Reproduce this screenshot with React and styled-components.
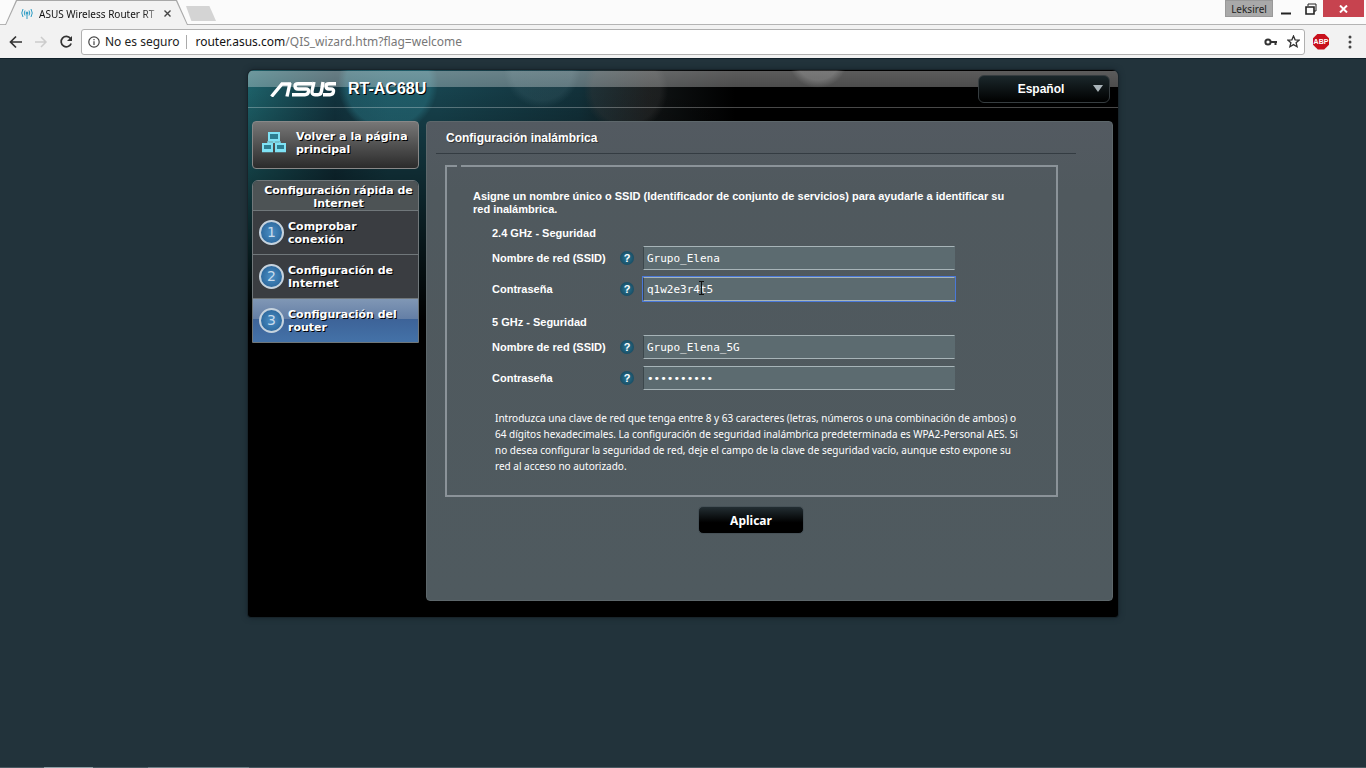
import React, { useState } from "react";
import styled, { createGlobalStyle } from "styled-components";

const STEPS = ["Comprobar conexión", "Configuración de Internet", "Configuración del router"];

const Field = ({ id, label, type = "text", value, onChange, focused, children }) => (
    <Row>
        <Label htmlFor={id}>{label}</Label>
        <HelpBtn type="button" aria-label={`Ayuda: ${label}`}>
            ?
        </HelpBtn>
        <InputWrap>
            <Input
                id={id}
                type={type}
                value={value}
                $focused={focused}
                onChange={(e) => onChange(id, e.target.value)}
            />
            {children}
        </InputWrap>
    </Row>
);

const AsusLogo = () => (
    <Logo viewBox="0 0 66 16" role="img" aria-label="ASUS">
        <g fill="none" stroke="#fff" strokeWidth="3.4">
            <path d="M1.500 15.500 L12 3 H21" />
            <path d="M20 2 L17 15.500" />
            <path d="M42 2.700 H28 Q25 2.700 25 5 Q25 8 28 8 H36 Q39 8 38.500 10.500 Q38 13.700 35 13.700 H22" />
            <path d="M44 1 L42 10 Q41.500 13.700 45 13.700 H48 Q51 13.700 51.500 10 L53 1" />
            <path d="M66 2.700 H59 Q56 2.700 56 5 Q56 8 59 8 H61 Q64 8 63.500 10.500 Q63 13.700 60 13.700 H53" />
        </g>
    </Logo>
);

const App = () => {
    const [values, setValues] = useState({
        ssid24: "Grupo_Elena",
        key24: "q1w2e3r4t5",
        ssid5: "Grupo_Elena_5G",
        key5: "q1w2e3r4t5",
    });
    const update = (id, value) => setValues({ ...values, [id]: value });

    return (
        <Window>
            <GlobalStyle />
            <TitleBar>
                <Tab>
                    <svg width="12" height="12" viewBox="0 0 12 12" fill="none" stroke="#2d9cc4">
                        <circle cx="6" cy="5" r="1" fill="#2d9cc4" />
                        <path d="M6 6V11M4 2.500Q2.500 5 4 7.500M8 2.500Q9.500 5 8 7.500M2 1Q-.5 5 2 9M10 1Q12.500 5 10 9" />
                    </svg>
                    <TabTitle>ASUS Wireless Router RT</TabTitle>
                    <TabClose aria-label="Cerrar pestaña">
                        <svg width="7" height="7" viewBox="0 0 7 7" stroke="#444" strokeWidth="1.4">
                            <path d="M.5 .5L6.500 6.500M6.500 .5L.5 6.500" />
                        </svg>
                    </TabClose>
                </Tab>
                <NewTab aria-label="Nueva pestaña" />
                <Spacer />
                <UserBtn>Leksirel</UserBtn>
                <WindowBtn aria-label="Minimizar">
                    <svg width="11" height="12" viewBox="0 0 11 12">
                        <path d="M1 10.500H11" stroke="#222" strokeWidth="2" />
                    </svg>
                </WindowBtn>
                <WindowBtn aria-label="Restaurar">
                    <svg width="12" height="12" viewBox="0 0 12 12" fill="none" stroke="#222">
                        <path d="M3 3V1H11V8H9" />
                        <path d="M1 4H9V11H1Z" strokeWidth="1.6" />
                    </svg>
                </WindowBtn>
                <CloseBtn aria-label="Cerrar">
                    <svg width="9" height="8" viewBox="0 0 9 8" stroke="#fff" strokeWidth="2">
                        <path d="M1 0.500L8 7.500M8 0.500L1 7.500" />
                    </svg>
                </CloseBtn>
            </TitleBar>

            <Toolbar>
                <ToolBtn aria-label="Atrás">
                    <svg width="14" height="14" viewBox="0 0 14 14" fill="none" stroke="#333" strokeWidth="1.7">
                        <path d="M13 7H2M7 1.500L1.500 7L7 12.500" />
                    </svg>
                </ToolBtn>
                <ToolBtn aria-label="Adelante">
                    <svg width="14" height="14" viewBox="0 0 14 14" fill="none" stroke="#ccc" strokeWidth="1.5">
                        <path d="M1 7H12M7 2L12 7L7 12" />
                    </svg>
                </ToolBtn>
                <ToolBtn aria-label="Recargar">
                    <svg width="14" height="14" viewBox="0 0 14 14" fill="none" stroke="#333" strokeWidth="1.7">
                        <path d="M11.500 3.500A5.200 5.200 0 1 0 12.200 8.500" />
                        <path d="M13 1V6H8Z" fill="#333" stroke="none" />
                    </svg>
                </ToolBtn>
                <AddressBar>
                    <svg width="12" height="12" viewBox="0 0 12 12" fill="none" stroke="#444" strokeWidth="1.2">
                        <circle cx="6" cy="6" r="5.2" />
                        <path d="M6 5.300V9M6 3V4.300" />
                    </svg>
                    <Insecure>No es seguro</Insecure>
                    <Url>
                        router.asus.com<UrlPath>/QIS_wizard.htm?flag=welcome</UrlPath>
                    </Url>
                    <svg width="14" height="8" viewBox="0 0 14 8" fill="none" stroke="#333" strokeWidth="2">
                        <circle cx="4" cy="4" r="2.6" />
                        <path d="M6.500 4H13M11.500 4V7" />
                    </svg>
                    <Star width="13" height="13" viewBox="0 0 13 13" fill="none" stroke="#333" strokeWidth="1.3">
                        <path d="M6.500 1L8.100 4.800L12.200 5.100L9.100 7.700L10.100 11.700L6.500 9.600L2.900 11.700L3.900 7.700L.8 5.100L4.900 4.800Z" />
                    </Star>
                </AddressBar>
                <AdBlockBtn>ABP</AdBlockBtn>
                <ToolBtn aria-label="Menú">
                    <svg width="4" height="14" viewBox="0 0 4 14" fill="#444">
                        <circle cx="2" cy="2" r="1.5" />
                        <circle cx="2" cy="7" r="1.5" />
                        <circle cx="2" cy="12" r="1.5" />
                    </svg>
                </ToolBtn>
            </Toolbar>

            <Page>
                <Router>
                    <Header>
                        <AsusLogo />
                        <Model>RT-AC68U</Model>
                        <LangWrap>
                            <LangSelect aria-label="Idioma" defaultValue="es">
                                <option value="es">Español</option>
                            </LangSelect>
                            <LangArrow viewBox="0 0 10 7" fill="#a9b3b8">
                                <path d="M0 0H10L5 7Z" />
                            </LangArrow>
                        </LangWrap>
                    </Header>
                    <Body>
                        <Sidebar>
                            <HomeBtn>
                                <svg width="26" height="22" viewBox="0 0 26 22" fill="#2d7f92" stroke="#7fe2f5" strokeWidth="2">
                                    <path d="M8 1H18V8H8ZM2 12H11V18H2ZM15 12H24V18H15Z" />
                                    <path d="M13 8V11M7 11V10H19V11M1 19.500H12M14 19.500H25" fill="none" strokeWidth="1.4" />
                                </svg>
                                <span>Volver a la página principal</span>
                            </HomeBtn>
                            <Menu>
                                <MenuTitle>Configuración rápida de Internet</MenuTitle>
                                {STEPS.map((step, i) => (
                                    <MenuItem key={step} href="#" $active={i === 2}>
                                        <StepNumber>{i + 1}</StepNumber>
                                        <StepName>{step}</StepName>
                                    </MenuItem>
                                ))}
                            </Menu>
                        </Sidebar>
                        <Content>
                            <Title>Configuración inalámbrica</Title>
                            <Form>
                                <legend />
                                <Intro>
                                    Asigne un nombre único o SSID (Identificador de conjunto de servicios) para
                                    ayudarle a identificar su red inalámbrica.
                                </Intro>
                                <Band>
                                    <BandTitle>2.4 GHz - Seguridad</BandTitle>
                                    <Field id="ssid24" label="Nombre de red (SSID)" value={values.ssid24} onChange={update} />
                                    <Field id="key24" label="Contraseña" value={values.key24} onChange={update} focused>
                                        <TextCursor viewBox="0 0 7 14" fill="none" stroke="#111">
                                            <path d="M1 .5H6M3.500 1V13M1 13.500H6" />
                                        </TextCursor>
                                    </Field>
                                </Band>
                                <Band>
                                    <BandTitle>5 GHz - Seguridad</BandTitle>
                                    <Field id="ssid5" label="Nombre de red (SSID)" value={values.ssid5} onChange={update} />
                                    <Field id="key5" label="Contraseña" type="password" value={values.key5} onChange={update} />
                                </Band>
                                <Note>
                                    Introduzca una clave de red que tenga entre 8 y 63 caracteres (letras, números o
                                    una combinación de ambos) o 64 dígitos hexadecimales. La configuración de
                                    seguridad inalámbrica predeterminada es WPA2-Personal AES. Si no desea configurar
                                    la seguridad de red, deje el campo de la clave de seguridad vacío, aunque esto
                                    expone su red al acceso no autorizado.
                                </Note>
                            </Form>
                            <ApplyBtn>Aplicar</ApplyBtn>
                        </Content>
                    </Body>
                </Router>
            </Page>
            <Taskbar />
        </Window>
    );
};

const GlobalStyle = createGlobalStyle`
    * {
        box-sizing: border-box;
    }
    body {
        margin: 0;
        background: #22333b;
        font-family: Arial, "Liberation Sans", sans-serif;
    }
    button {
        padding: 0;
        border: none;
        background: none;
        cursor: pointer;
    }
    svg {
        flex-shrink: 0;
    }
`;

const Window = styled.div`
    display: flex;
    flex-direction: column;
    min-height: 100vh;
`;

const TitleBar = styled.header`
    display: flex;
    align-items: flex-start;
    height: 25px;
    background: #fbfbfb;
    border-bottom: 1px solid #b4b4b4;
    font-family: "Noto Sans", sans-serif;
`;

const Tab = styled.div`
    display: flex;
    align-items: center;
    width: 188px;
    height: 25px;
    padding: 2px 16px 0 21px;
    background: #a8a8a8;
    clip-path: polygon(5px 100%, 16px 0, 177px 0, 188px 100%);
    position: relative;
    z-index: 0;

    &::before {
        content: "";
        position: absolute;
        inset: 1px 0 0;
        z-index: -1;
        background: #f2f2f2;
        clip-path: polygon(6px 100%, 17px 0, 176px 0, 187px 100%);
    }
`;

const TabTitle = styled.span`
    width: 118px;
    margin-left: 6px;
    white-space: nowrap;
    font-size: 10px;
    color: #111;
    mask-image: linear-gradient(90deg, #000 88%, #0004);
`;

const TabClose = styled.button`
    display: flex;
    margin-left: 7px;
`;

const NewTab = styled.button`
    width: 30px;
    height: 15px;
    margin: 6px 0 0 -2px;
    background: #d4d4d4;
    clip-path: polygon(0 0, 78% 0, 100% 100%, 18% 100%);
`;

const Spacer = styled.div`
    flex: 1;
`;

const UserBtn = styled.button`
    width: 48px;
    height: 17px;
    background: #a9a9a9;
    border: 1px solid #999;
    font-family: "Noto Sans", sans-serif;
    font-size: 10px;
    line-height: 14px;
    color: #222;
`;

const WindowBtn = styled.button`
    display: flex;
    align-items: center;
    justify-content: center;
    width: 25px;
    height: 17px;
`;

const CloseBtn = styled(WindowBtn)`
    width: 41px;
    margin-right: 2px;
    background: #c7434f;
`;

const Toolbar = styled.div`
    display: flex;
    align-items: center;
    height: 34px;
    padding: 0 9px;
    gap: 11px;
    background: #f2f2f2;
    border-bottom: 1px solid #10202a;
    font-family: "Noto Sans", sans-serif;
`;

const ToolBtn = styled.button`
    display: flex;
    justify-content: center;
    min-width: 14px;
`;

const AddressBar = styled.div`
    display: flex;
    align-items: center;
    flex: 1;
    height: 26px;
    margin: 0 -3px;
    padding: 0 4px 0 6px;
    background: #fff;
    border: 1px solid #b0b0b0;
    border-radius: 3px;
    font-size: 12px;
`;

const Insecure = styled.span`
    margin-left: 5px;
    padding-right: 7px;
    border-right: 1px solid #aaa;
    line-height: 14px;
    color: #222;
`;

const Url = styled.span`
    flex: 1;
    margin-left: 8px;
    color: #111;
`;

const UrlPath = styled.span`
    color: #777;
`;

const Star = styled.svg`
    margin-left: 9px;
`;

const AdBlockBtn = styled.button`
    width: 16px;
    height: 16px;
    margin-right: 3px;
    background: #c8101c;
    clip-path: polygon(30% 0, 70% 0, 100% 30%, 100% 70%, 70% 100%, 30% 100%, 0 70%, 0 30%);
    font-family: "Liberation Sans", sans-serif;
    font-size: 7px;
    font-weight: bold;
    color: #fff;
`;

const Page = styled.main`
    flex: 1;
    padding: 11px 16px 24px;
    background: #22333b;
`;

const Router = styled.div`
    max-width: 870px;
    margin: 0 auto;
    padding: 0 5px 16px 4px;
    border-radius: 6px 6px 3px 3px;
    box-shadow: 0 0 0 1px #18242a, 0 0 6px #131f28;
    background:
        linear-gradient(#ffffff5c, #ffffff4c) 0 1px / 100% 16px no-repeat,
        linear-gradient(#ffffff50, #ffffff40) 0 37px / 100% 1px no-repeat,
        radial-gradient(circle at 140px 14px, #2a7a8870 0 42px, transparent 50px),
        radial-gradient(circle at 294px 0, #3b606a50 0 30px, transparent 38px),
        radial-gradient(circle at 570px -12px, #77777760 0 22px, transparent 30px),
        radial-gradient(circle at 378px 20px, #3b3b3b50 0 34px, transparent 42px),
        linear-gradient(transparent 20px, #000 250px),
        linear-gradient(90deg, #1d6068, #12333e 10%, #17434e 16%, #17434e 22%, #12313a 38%, #101415 46%, #000 56%);
`;

const Header = styled.div`
    display: flex;
    align-items: center;
    height: 37px;
    padding: 0 3px 0 18px;
`;

const Logo = styled.svg`
    width: 66px;
    height: 16px;
`;

const Model = styled.h1`
    flex: 1;
    margin: 0 0 0 12px;
    font-size: 16px;
    font-weight: bold;
    color: #fff;
    text-shadow: 1px 1px #000;
`;

const LangWrap = styled.div`
    position: relative;
    display: flex;
    width: 132px;
`;

const LangSelect = styled.select`
    width: 100%;
    height: 28px;
    padding: 0 6px 0 0;
    appearance: none;
    background: linear-gradient(#1b272b, #000);
    border: 1px solid #363d40;
    border-radius: 6px;
    font-family: "Liberation Sans", sans-serif;
    font-size: 12px;
    font-weight: bold;
    text-align: center;
    text-align-last: center;
    color: #fff;
`;

const LangArrow = styled.svg`
    position: absolute;
    top: 10px;
    right: 7px;
    width: 10px;
    height: 7px;
    pointer-events: none;
`;

const Body = styled.div`
    display: flex;
    gap: 7px;
    padding-top: 14px;
`;

const Sidebar = styled.nav`
    flex: 0 0 167px;
    font-family: "DejaVu Sans", Verdana, sans-serif;
    font-size: 11px;
    font-weight: bold;
    line-height: 13px;
    color: #fff;
    text-shadow: 1px 1px #000;
`;

const HomeBtn = styled.button`
    display: flex;
    align-items: center;
    gap: 9px;
    width: 100%;
    height: 48px;
    padding: 0 8px 4px;
    background: linear-gradient(#777, #2b2b2b);
    border: 1px solid #888;
    border-radius: 4px;
    font: inherit;
    text-align: left;
    text-shadow: inherit;
    color: inherit;
`;

const Menu = styled.div`
    margin-top: 11px;
    border: 1px solid #70777a;
    border-radius: 6px 6px 0 0;
    overflow: hidden;
`;

const MenuTitle = styled.h2`
    margin: 0;
    padding: 3px 0 0 6px;
    background: #4d5355;
    font-size: 11px;
    line-height: 13px;
    text-align: center;
`;

const MenuItem = styled.a`
    display: flex;
    align-items: center;
    gap: 4px;
    height: 44px;
    padding: 0 6px;
    border-top: 1px solid #70777a;
    background: ${({ $active }) =>
        $active ? "linear-gradient(#8097b5, #647fa6 46%, #3d6398 47%, #4472a8)" : "#3a3d41"};
    color: #fff;
    text-decoration: none;
`;

const StepNumber = styled.span`
    display: flex;
    align-items: center;
    justify-content: center;
    flex: 0 0 25px;
    height: 25px;
    background: radial-gradient(#4b8fc5, #235c90);
    border: 2px solid #c6d3de;
    border-radius: 50%;
    font-size: 14px;
    font-weight: normal;
    color: #c8dcec;
    text-shadow: none;
`;

const StepName = styled.span`
    max-width: 110px;
`;

const Content = styled.section`
    flex: 1;
    min-width: 0;
    min-height: 480px;
    padding: 9px 19px 0;
    background: linear-gradient(#535a61, #50595e 70px, #4f5a5f);
    border: 1px solid #5d676b;
    border-radius: 4px;
    color: #fff;
`;

const Title = styled.h2`
    margin: 0 17px 0 -10px;
    padding: 0 0 7px 10px;
    border-bottom: 1px solid #343c42;
    font-size: 12px;
    line-height: 15px;
    text-shadow: 1px 1px #333;
`;

const Form = styled.fieldset`
    margin: 11px 35px 0 -1px;
    padding: 23px 20px 21px 26px;
    border: 2px solid #8b9399;
    font-size: 11px;
    font-weight: bold;

    legend {
        width: 4px;
        height: 2px;
        margin-left: -16px;
        padding: 0;
    }
`;

const Intro = styled.p`
    margin: 0 0 7px;
    max-width: 545px;
    line-height: 13px;
`;

const Band = styled.section`
    padding: 0 81px 4px 19px;
`;

const BandTitle = styled.h3`
    margin: 0 0 3px;
    font-size: 11px;
    line-height: 20px;
`;

const Row = styled.div`
    display: flex;
    align-items: center;
    margin-bottom: 7px;
`;

const Label = styled.label`
    flex: 0 0 128px;
    white-space: nowrap;
`;

const HelpBtn = styled.button`
    flex: 0 0 14px;
    height: 14px;
    background: radial-gradient(#2b7896, #123c50);
    border-radius: 50%;
    font-family: "Liberation Sans", sans-serif;
    font-size: 11px;
    font-weight: bold;
    line-height: 14px;
    color: #fff;
`;

const InputWrap = styled.div`
    position: relative;
    display: flex;
    flex: 1;
    margin-left: 9px;
`;

const Input = styled.input`
    width: 100%;
    height: 24px;
    padding: 0 3px;
    background: #5c6b70;
    border: 1px solid #a7b4b8;
    border-left-color: #3c474c;
    border-right-color: #5c6b70;
    outline: ${({ $focused }) => ($focused ? "1px solid #4a78d8" : "none")};
    font-family: "DejaVu Sans Mono", "Lucida Console", monospace;
    font-size: 11px;
    color: #fff;
`;

const TextCursor = styled.svg`
    position: absolute;
    top: 4px;
    left: 55px;
    width: 7px;
    height: 14px;
    pointer-events: none;
`;

const Note = styled.p`
    max-width: 530px;
    margin: 9px 0 0 22px;
    font-family: "Noto Sans", sans-serif;
    font-size: 10px;
    font-weight: normal;
    line-height: 16px;
`;

const ApplyBtn = styled.button`
    display: block;
    width: 106px;
    height: 28px;
    margin: 9px auto 0 252px;
    background: linear-gradient(#232e33, #000 60%);
    border: 1px solid #465157;
    border-radius: 5px;
    font-family: "Noto Sans", sans-serif;
    font-size: 12px;
    font-weight: bold;
    color: #fff;
`;

const Taskbar = styled.footer`
    height: 1px;
    background: linear-gradient(90deg, #4a5a62 44px, #8fa0a6 44px 93px, #4a5a62 93px 148px, #6f8087 148px 249px, #4a5a62 249px);
`;

export default App;
